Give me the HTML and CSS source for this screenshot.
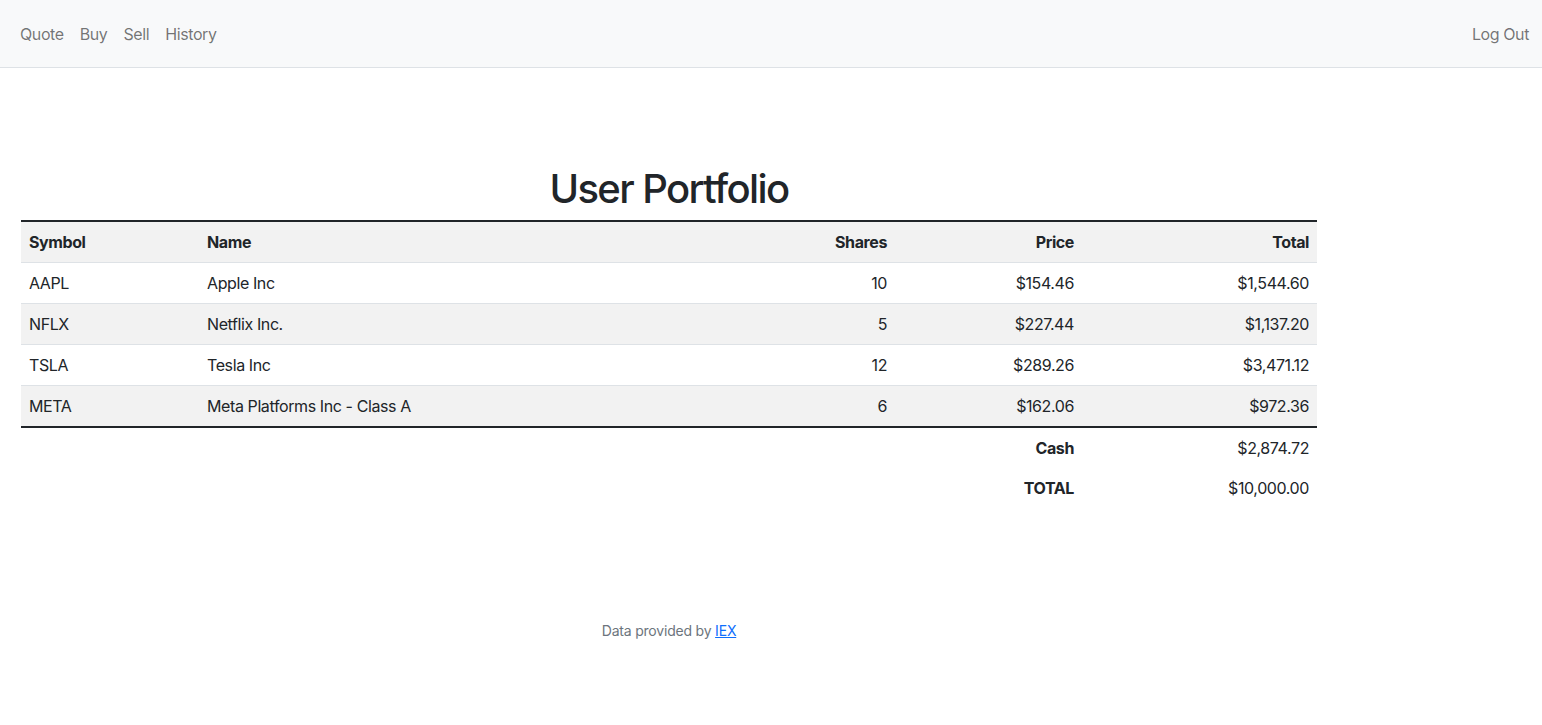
FILE: index.html
```html
<!DOCTYPE html>
<html lang="en">
<head>
<meta charset="utf-8">
<title>C$50 Finance: Portfolio</title>
<link rel="stylesheet" href="styles.css">
</head>
<body>
<nav class="navbar">
  <ul class="nav-left">
    <li><a class="nav-link" href="#">Quote</a></li>
    <li><a class="nav-link" href="#">Buy</a></li>
    <li><a class="nav-link" href="#">Sell</a></li>
    <li><a class="nav-link" href="#">History</a></li>
  </ul>
  <ul class="nav-right">
    <li><a class="nav-link last" href="#">Log Out</a></li>
  </ul>
</nav>
<main class="main">
  <h1 class="title">User Portfolio</h1>
  <table class="table">
    <thead>
      <tr class="shade">
        <th class="c-sym">Symbol</th>
        <th class="c-name">Name</th>
        <th class="c-shares num">Shares</th>
        <th class="c-price num">Price</th>
        <th class="c-total num">Total</th>
      </tr>
    </thead>
    <tbody>
      <tr><td>AAPL</td><td>Apple Inc</td><td class="num">10</td><td class="num">$154.46</td><td class="num">$1,544.60</td></tr>
      <tr class="shade"><td>NFLX</td><td>Netflix Inc.</td><td class="num">5</td><td class="num">$227.44</td><td class="num">$1,137.20</td></tr>
      <tr><td>TSLA</td><td>Tesla Inc</td><td class="num">12</td><td class="num">$289.26</td><td class="num">$3,471.12</td></tr>
      <tr class="shade last-row"><td>META</td><td>Meta Platforms Inc - Class A</td><td class="num">6</td><td class="num">$162.06</td><td class="num">$972.36</td></tr>
    </tbody>
    <tfoot>
      <tr><td class="blank" colspan="3"></td><td class="num bold">Cash</td><td class="num">$2,874.72</td></tr>
      <tr><td class="blank" colspan="3"></td><td class="num bold">TOTAL</td><td class="num">$10,000.00</td></tr>
    </tfoot>
  </table>
</main>
<footer class="footer">Data provided by <a class="link" href="#">IEX</a></footer>
</body>
</html>
```
FILE: styles.css
```css
* { box-sizing: border-box; }
html, body { margin: 0; padding: 0; }
body {
  font-family: Inter, "Liberation Sans", sans-serif;
  font-size: 16px;
  line-height: 24px;
  color: #212529;
  background: #fff;
}
.navbar {
  display: flex;
  justify-content: space-between;
  align-items: center;
  height: 68px;
  padding: 0 5px 0 12px;
  background: #f8f9fa;
  border-bottom: 1px solid #dee2e6;
}
.nav-left, .nav-right {
  display: flex;
  list-style: none;
  margin: 0;
  padding: 0;
}
.nav-link {
  display: block;
  padding: 8px;
  color: rgba(0, 0, 0, 0.55);
  text-decoration: none;
  letter-spacing: -0.4px;
}
.main {
  width: 1296px;
  margin-left: 21px;
  padding-top: 97px;
  text-align: center;
}
.title {
  margin: 0 0 7px;
  font-size: 40px;
  line-height: 48px;
  font-weight: 500;
  letter-spacing: -1.6px;
}
.table {
  width: 100%;
  border-collapse: collapse;
  text-align: left;
  letter-spacing: -0.4px;
}
.table thead tr { border-top: 2px solid #212529; }
.table th, .table td {
  padding: 8px;
  vertical-align: top;
}
.table thead th, .table tbody td { border-bottom: 1px solid #dee2e6; }
.table tbody tr.last-row td { border-bottom: 2px solid #212529; }
.shade { background: #f2f2f2; }
.num { text-align: right; }
.bold { font-weight: 700; }
th { font-weight: 700; }
.c-sym { width: 178px; }
.c-name { width: 500px; }
.c-shares { width: 196px; }
.c-price { width: 187px; }
.c-total { width: 235px; }
.footer {
  width: 1296px;
  margin: 112px 0 0 21px;
  text-align: center;
  font-size: 14px;
  line-height: 21px;
  color: #6c757d;
  letter-spacing: -0.2px;
}
.link { color: #0d6efd; }
```
